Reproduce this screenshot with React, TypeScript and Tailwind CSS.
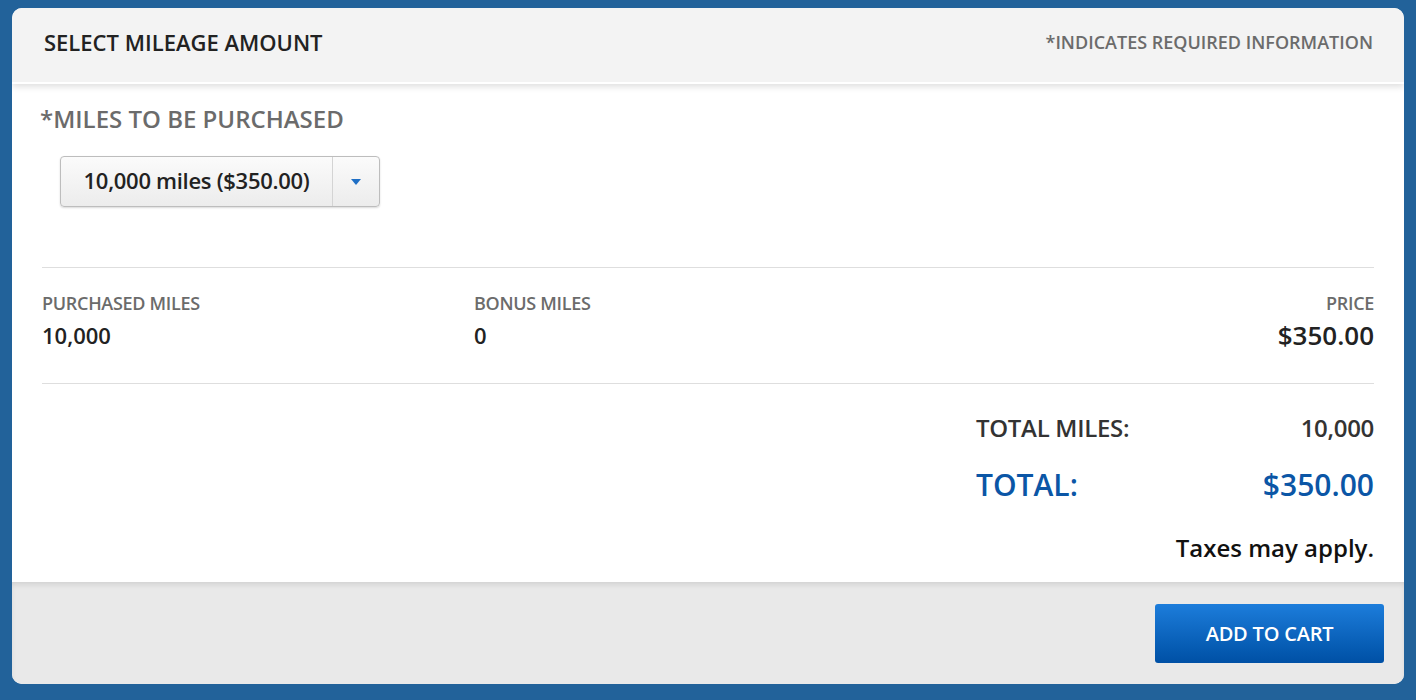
const App = () => {
  return (
    <div
      className="w-[1416px] h-[700px] bg-[#22629a] pt-[8px] px-[12px]"
      style={{ fontFamily: '"Open Sans", "Liberation Sans", sans-serif' }}
    >
      <div className="w-[1392px] h-[676px] bg-white rounded-[10px] overflow-hidden flex flex-col">
        {/* header */}
        <div className="h-[76px] shrink-0 bg-[#f3f3f3] border-b-2 border-white shadow-[0_3px_6px_rgba(0,0,0,0.12)] relative z-10 flex items-center justify-between pl-[32px] pr-[31px] pb-[6px]">
          <div className="text-[22px] font-semibold text-[#222]">SELECT MILEAGE AMOUNT</div>
          <div className="text-[18px] font-semibold text-[#6b6b6b]">*INDICATES REQUIRED INFORMATION</div>
        </div>

        {/* body */}
        <div className="flex-1 px-[30px]">
          <div className="pt-[20px] text-[24px] font-semibold text-[#6b6b6b] leading-[30px] -ml-[2px]">*MILES TO BE PURCHASED</div>
          <div className="mt-[22px] ml-[18px] flex w-[320px] h-[51px] rounded-[4px] border border-[#bdbdbd] shadow-[0_1px_2px_rgba(0,0,0,0.15)] bg-gradient-to-b from-[#fbfbfb] to-[#ececec] overflow-hidden">
            <div className="flex-1 flex items-center justify-center text-[22px] font-semibold text-[#222] border-r border-[#d4d4d4] tracking-[-0.3px] pb-[2px]">
              10,000 miles ($350.00)
            </div>
            <div className="w-[46px] flex items-center justify-center">
              <svg width="10" height="6" viewBox="0 0 10 6">
                <path d="M0 0h10L5 6z" fill="#1f6fc5" />
              </svg>
            </div>
          </div>

          <div className="mt-[60px] border-t border-[#dedede]" />

          <div className="pt-[23px] pb-[33px] grid grid-cols-[432px_1fr_auto]">
            <div>
              <div className="text-[18px] font-semibold text-[#6b6b6b] leading-[24px] tracking-[-0.3px]">PURCHASED MILES</div>
              <div className="mt-[5px] text-[22px] font-semibold text-[#222] leading-[30px]">10,000</div>
            </div>
            <div>
              <div className="text-[18px] font-semibold text-[#6b6b6b] leading-[24px] tracking-[-0.3px]">BONUS MILES</div>
              <div className="mt-[5px] text-[22px] font-semibold text-[#222] leading-[30px]">0</div>
            </div>
            <div className="text-right">
              <div className="text-[18px] font-semibold text-[#6b6b6b] leading-[24px] tracking-[-0.3px]">PRICE</div>
              <div className="mt-[4px] text-[26px] font-semibold text-[#222] leading-[32px] -mb-[1px]">$350.00</div>
            </div>
          </div>

          <div className="border-t border-[#dedede]" />

          <div className="flex justify-end">
            <div className="w-[398px] pt-[28px]">
              <div className="flex justify-between text-[24px] font-semibold text-[#333] leading-[32px] tracking-[-0.3px]">
                <span>TOTAL MILES:</span>
                <span>10,000</span>
              </div>
              <div className="mt-[21px] flex justify-between text-[30px] font-semibold text-[#0b56a6] leading-[40px]">
                <span>TOTAL:</span>
                <span>$350.00</span>
              </div>
              <div className="mt-[27px] text-right text-[24px] font-semibold text-[#111] leading-[32px]">Taxes may apply.</div>
            </div>
          </div>
        </div>

        {/* footer */}
        <div className="h-[102px] shrink-0 bg-[#e9e9e9] shadow-[inset_0_4px_6px_-2px_rgba(0,0,0,0.12)] flex items-start justify-end pt-[22px] pr-[20px]">
          <button className="w-[229px] h-[59px] rounded-[3px] bg-gradient-to-b from-[#1c7ddb] to-[#0050a5] text-white text-[20px] font-semibold tracking-[-0.2px]">
            ADD TO CART
          </button>
        </div>
      </div>
    </div>
  )
}

export default App
